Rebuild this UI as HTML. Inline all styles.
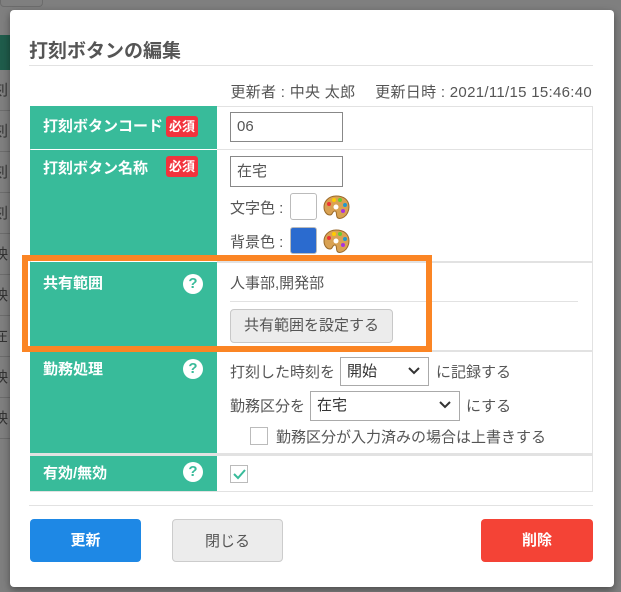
<!DOCTYPE html>
<html><head><meta charset="utf-8"><style>
*{box-sizing:border-box;margin:0;padding:0}
body{width:621px;height:592px;background:#7f7f7f;position:relative;overflow:hidden;font-family:"Liberation Sans","Noto Sans CJK JP",sans-serif;color:#555;font-size:15px}
.a{position:absolute;white-space:nowrap}
.bgl{position:absolute;left:0;width:10px;height:41px;border-bottom:1px solid #6c6c6c;font-size:15px;color:#333;line-height:41px;overflow:hidden;text-indent:-7px}
.modal{position:absolute;left:10px;top:10px;width:604px;height:577px;background:#fff;border-radius:4px;box-shadow:0 3px 8px rgba(0,0,0,.4)}
.lab{position:absolute;left:30px;width:187px;background:#38bb9a;color:#fff;font-weight:bold;font-size:15px;padding:9px 0 0 13px;white-space:nowrap}
.req{position:absolute;left:136px;background:#f2333d;color:#fff;font-size:13px;padding:2px 3px;border-radius:3px;font-weight:bold;white-space:nowrap;line-height:17px}
.q{position:absolute;left:153px;width:20px;height:20px;border-radius:50%;background:#fff;color:#38bb9a;font-weight:bold;font-size:15px;text-align:center;line-height:20px}
.inp{position:absolute;border:1px solid #888;background:#fff;font-size:15px;padding-left:6px;color:#555}
.sel{position:absolute;border:1px solid #aaa;background:#fff;font-size:15px;padding-left:6px;color:#333}
.sel svg{position:absolute;right:8px;top:9px}
.hl{position:absolute;height:1px;background:#e2e2e2}
.btn{position:absolute;top:519px;height:43px;border-radius:4px;text-align:center;line-height:43px;font-size:15px;font-weight:bold}
</style></head><body>
<div style="position:absolute;left:0;top:0;width:43px;height:7px;border:1px solid #6c6c6c;border-top:0;border-radius:0 0 4px 4px"></div>
<div style="position:absolute;left:0;top:35px;width:10px;height:35px;background:#1f5c4b"></div>
<div class="bgl" style="top:70px">刻</div><div class="bgl" style="top:111px">刻</div><div class="bgl" style="top:152px">刻</div><div class="bgl" style="top:193px">刻</div><div class="bgl" style="top:234px">映</div><div class="bgl" style="top:275px">映</div><div class="bgl" style="top:316px">在</div><div class="bgl" style="top:357px">映</div><div class="bgl" style="top:398px">映</div>
<div class="modal"></div>
<div class="a" style="left:29px;top:36px;font-size:19px;font-weight:bold;color:#555">打刻ボタンの編集</div>
<div class="hl" style="left:29px;top:65px;width:564px"></div>
<div class="a" style="right:29px;top:81px;font-size:15px;color:#555;letter-spacing:0.3px">更新者 : 中央 太郎　 更新日時 : 2021/11/15 15:46:40</div>
<div style="position:absolute;left:30px;top:106px;width:563px;height:386px;border:1px solid #e2e2e2"></div>
<div class="hl" style="left:217px;top:149px;width:376px"></div>
<div class="hl" style="left:217px;top:261px;width:376px;height:2px"></div>
<div class="hl" style="left:217px;top:350px;width:376px;height:2px"></div>
<div class="hl" style="left:30px;top:453px;width:563px;height:3px"></div>
<div class="lab" style="top:106px;height:43px">打刻ボタンコード<span class="req" style="top:10px">必須</span></div>
<div class="lab" style="top:150px;height:111px;padding-top:7px">打刻ボタン名称<span class="req" style="top:6px">必須</span></div>
<div class="lab" style="top:262px;height:89px;padding-top:10px">共有範囲<span class="q" style="top:12px">?</span></div>
<div class="lab" style="top:351px;height:102px;padding-top:7px">勤務処理<span class="q" style="top:8px">?</span></div>
<div class="lab" style="top:456px;height:35px;padding-top:6px">有効/無効<span class="q" style="top:6px">?</span></div>
<div class="inp" style="left:230px;top:112px;width:113px;height:30px;line-height:28px">06</div>
<div class="inp" style="left:230px;top:156px;width:113px;height:31px;line-height:29px">在宅</div>
<div class="a" style="left:230px;top:197px">文字色 :</div>
<div style="position:absolute;left:290px;top:193px;width:27px;height:27px;border:1px solid #bbb;border-radius:3px;background:#fff"></div>
<div class="a" style="left:230px;top:231px">背景色 :</div>
<div style="position:absolute;left:290px;top:227px;width:27px;height:27px;border:1px solid #bbb;border-radius:3px;background:#2b6bcf"></div>
<svg class="a" style="left:322px;top:194px" width="28" height="26" viewBox="0 0 28 26"><path d="M14 2C6 2 2 8 2 13c0 5 3 8 6 8 3 0 2-4 5-4 2 0 1 4 2 6 1 2 4 2 7 0 3-2 5-6 5-10C27 6 22 2 14 2z" fill="#d9a253" stroke="#9a6a2a"/><circle cx="7" cy="10" r="2" fill="#e33"/><circle cx="12" cy="6" r="2" fill="#fc0"/><circle cx="18" cy="6" r="2" fill="#6c3"/><circle cx="23" cy="11" r="2" fill="#29c"/><circle cx="21" cy="17" r="2" fill="#a3d"/><circle cx="14" cy="13" r="2.5" fill="#fff"/></svg>
<svg class="a" style="left:322px;top:228px" width="28" height="26" viewBox="0 0 28 26"><path d="M14 2C6 2 2 8 2 13c0 5 3 8 6 8 3 0 2-4 5-4 2 0 1 4 2 6 1 2 4 2 7 0 3-2 5-6 5-10C27 6 22 2 14 2z" fill="#d9a253" stroke="#9a6a2a"/><circle cx="7" cy="10" r="2" fill="#e33"/><circle cx="12" cy="6" r="2" fill="#fc0"/><circle cx="18" cy="6" r="2" fill="#6c3"/><circle cx="23" cy="11" r="2" fill="#29c"/><circle cx="21" cy="17" r="2" fill="#a3d"/><circle cx="14" cy="13" r="2.5" fill="#fff"/></svg>
<div class="a" style="left:230px;top:272px">人事部,開発部</div>
<div class="hl" style="left:230px;top:301px;width:348px"></div>
<div class="a" style="left:230px;top:309px;width:163px;height:34px;border:1px solid #c8c8c8;border-radius:4px;background:#ececec;text-align:center;line-height:32px">共有範囲を設定する</div>
<div style="position:absolute;left:22px;top:255px;width:410px;height:97px;border:6px solid #fb8524"></div>
<div class="a" style="left:230px;top:361px">打刻した時刻を</div>
<div class="sel" style="left:340px;top:357px;width:89px;height:29px;line-height:27px">開始<svg width="12" height="8"><path d="M1 1l5 5 5-5" fill="none" stroke="#333" stroke-width="2"/></svg></div>
<div class="a" style="left:436px;top:361px">に記録する</div>
<div class="a" style="left:230px;top:395px">勤務区分を</div>
<div class="sel" style="left:310px;top:391px;width:150px;height:30px;line-height:28px">在宅<svg width="12" height="8"><path d="M1 1l5 5 5-5" fill="none" stroke="#333" stroke-width="2"/></svg></div>
<div class="a" style="left:466px;top:395px">にする</div>
<div style="position:absolute;left:250px;top:427px;width:18px;height:18px;border:1px solid #bbb;background:#fff"></div>
<div class="a" style="left:276px;top:426px">勤務区分が入力済みの場合は上書きする</div>
<div style="position:absolute;left:230px;top:465px;width:18px;height:18px;border:1px solid #bbb;background:#fff"><svg width="16" height="16" style="position:absolute;left:0;top:0"><path d="M3 8l4 4 7-8" fill="none" stroke="#38bb9a" stroke-width="2"/></svg></div>
<div class="hl" style="left:29px;top:505px;width:564px"></div>
<div class="btn" style="left:30px;width:111px;background:#1e88e5;color:#fff">更新</div>
<div class="btn" style="left:172px;width:111px;background:#ececec;border:1px solid #ccc;color:#555;font-weight:normal">閉じる</div>
<div class="btn" style="left:481px;width:112px;background:#f44336;color:#fff">削除</div>
</body></html>
